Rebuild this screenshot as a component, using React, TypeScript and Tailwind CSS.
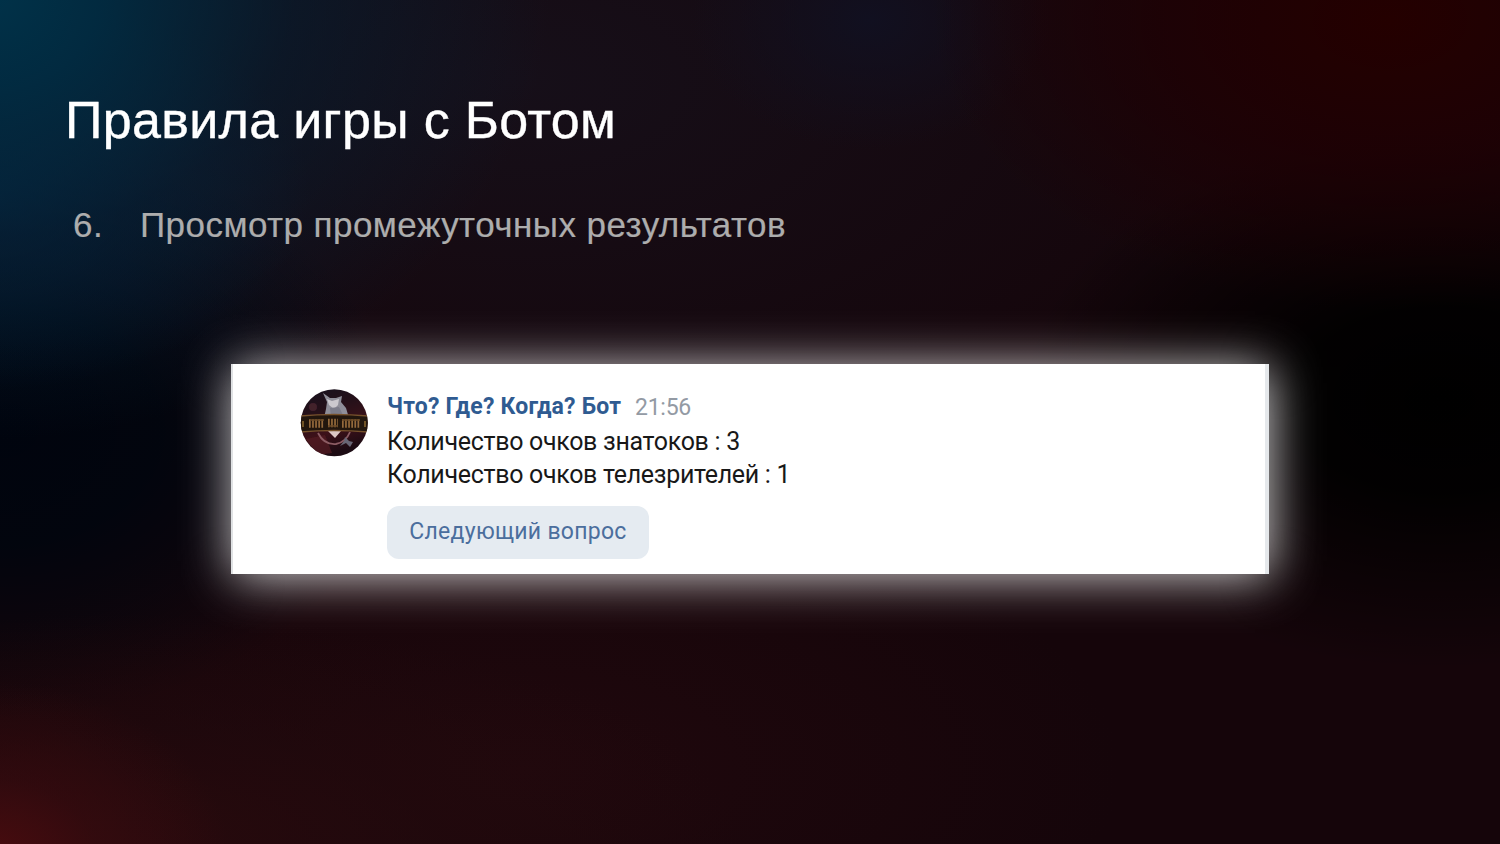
function Avatar() {
  return (
    <svg className="size-[68px] shrink-0" viewBox="0 0 68 68" aria-hidden="true">
      <defs>
        <clipPath id="disc"><circle cx="34.3" cy="33.7" r="33.5" /></clipPath>
        <linearGradient id="night" x1="0" y1="0" x2="0.3" y2="1">
          <stop offset="0" stopColor="#16121f" />
          <stop offset="0.35" stopColor="#241019" />
          <stop offset="0.7" stopColor="#3d1119" />
          <stop offset="1" stopColor="#1c0b13" />
        </linearGradient>
        <filter id="soft"><feGaussianBlur stdDeviation="0.75" /></filter>
      </defs>
      <g clipPath="url(#disc)">
        <rect width="68" height="68" fill="url(#night)" />
        <g filter="url(#soft)">
          <circle cx="13" cy="18" r="4" fill="#43202b" />
          <path d="M6 50 L25 46 L32 64 L18 66Z" fill="#541b21" opacity="0.7" />
          <path d="M23 4 L30 9 L36 9 L42 7 L41 13 L46 19 L49 29 L24 29 L26 20 L27 13Z" fill="#8f8e99" />
          <path d="M27 10 L32 12 L39 10 L38 16 L34 20 L29 16Z" fill="#cbc8ce" />
          <path d="M30 19 L39 18 L44 28 L31 28Z" fill="#7c7b8a" />
          <path d="M18 44 Q24 56 36 55 Q46 53 50 43" fill="none" stroke="#8b5b64" strokeWidth="1.8" />
          <path d="M28 42 L41 42 L35 49Z" fill="#ddc8c5" />
          <path d="M45 48 L49 52 L53 53 L50 58 L46 54 L40 57 L44 52Z" fill="#686674" />
          <path d="M0 27 Q34 24 68 27 V43 Q34 40 0 43Z" fill="#211511" />
          <path d="M0 27 Q34 24 68 27 M0 43 Q34 40 68 43" fill="none" stroke="#76512c" strokeWidth="1.3" />
          <path d="M9 34.5 H24 M28 34 H38 M42 34.5 H60" fill="none" stroke="#94693a" strokeWidth="8.5" strokeDasharray="1.7 1.4" />
          <path d="M10 31 H24 M28 37 H38 M42 31 H60" fill="none" stroke="#6b4a27" strokeWidth="1.3" />
          <path d="M3 32 V38 M65 32 V38" stroke="#715326" strokeWidth="2" />
        </g>
      </g>
    </svg>
  );
}

export default function App() {
  return (
    <main className="h-[844px] w-[1500px] overflow-hidden bg-[#15050a] bg-[radial-gradient(ellipse_570px_450px_at_-20px_-10px,#00334a_0%,#002d44e6_22%,#04213688_55%,#04203400_100%),radial-gradient(ellipse_330px_200px_at_-20px_190px,#042a4ab3_0%,#04264400_100%),radial-gradient(ellipse_240px_180px_at_-10px_860px,#4a0c0f_0%,#3a0b0f99_45%,#30090e00_100%),radial-gradient(ellipse_620px_230px_at_120px_844px,#280a0d_0%,#240a0d80_50%,#220a0d00_100%),radial-gradient(ellipse_400px_290px_at_0px_430px,#00040e_0%,#00050ee6_40%,#00050e00_100%),radial-gradient(ellipse_460px_290px_at_1390px_20px,#240000_0%,#200003b3_50%,#1a030500_100%),radial-gradient(ellipse_420px_270px_at_1440px_400px,#000000_0%,#000000e6_35%,#00000000_100%),radial-gradient(ellipse_600px_280px_at_520px_770px,#20080d_0%,#20070d00_100%),radial-gradient(ellipse_180px_130px_at_870px_20px,#111020_0%,#11102000_100%),radial-gradient(ellipse_800px_430px_at_520px_80px,#160f19_0%,#170e1800_100%)] pl-[65px] font-['Liberation_Sans',Arial,sans-serif]">
      <h1 className="flex h-[180px] items-start pt-[90px] text-[52px] leading-[60px] tracking-[0.33px] whitespace-nowrap text-white [-webkit-text-stroke:0.4px_white]">
        Правила игры с Ботом
      </h1>
      <div className="flex h-[184px] pt-[25px] text-[35px] leading-[40px] tracking-[0.45px] whitespace-nowrap text-[#adadad] [-webkit-text-stroke:0.2px_#adadad]">
        <span className="w-[75px] pl-[8px]">6.</span>
        <span>Просмотр промежуточных результатов</span>
      </div>
      <section className="ml-[166px] flex h-[210px] w-[1038px] border-r-4 border-l-2 border-r-[#e5e8eb] border-l-[#e0e2e4] bg-white pt-[25px] pl-[67px] font-['Roboto',sans-serif] shadow-[2px_3px_46px_0px_rgba(255,255,255,0.82)]">
        <Avatar />
        <div className="ml-[19px] flex flex-col items-start pt-px whitespace-nowrap">
          <div className="flex h-[35px] items-start">
            <span className="text-[23px] leading-[34px] font-bold tracking-[0.2px] text-[#2f5b91]">Что? Где? Когда? Бот</span>
            <span className="ml-[14px] pt-px text-[23px] leading-[34px] tracking-[-0.3px] text-[#939aa4]">21:56</span>
          </div>
          <p className="h-[33px] text-[25px] leading-[33px] tracking-[-0.31px] text-[#181818]">Количество очков знатоков : 3</p>
          <p className="h-[33px] text-[25px] leading-[33px] tracking-[-0.31px] text-[#181818]">Количество очков телезрителей : 1</p>
          <button className="mt-[15px] h-[53px] w-[262px] rounded-[12px] bg-[#e5ebf1] text-[23px] tracking-[0.28px] text-[#4b6e9d]">Следующий вопрос</button>
        </div>
      </section>
    </main>
  );
}
